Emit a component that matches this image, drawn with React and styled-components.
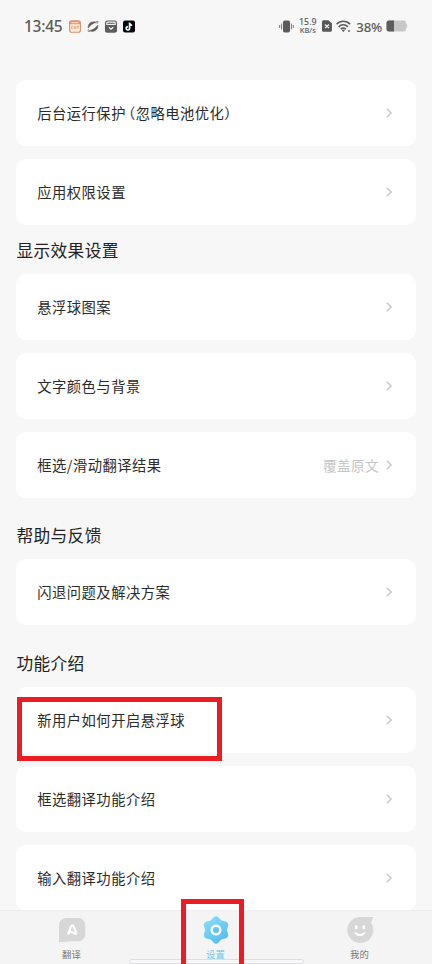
import React from "react";
import styled, { createGlobalStyle } from "styled-components";

const GlobalStyle = createGlobalStyle`
  html, body { margin: 0; padding: 0; background: #f7f7f7; }
  * { box-sizing: border-box; }
`;

const Screen = styled.div`
  position: relative;
  display: flex;
  flex-direction: column;
  width: 432px;
  height: 964px;
  overflow: hidden;
  background: #f7f7f7;
  color: #2b2b2b;
  font-family: "Noto Sans CJK SC", sans-serif;
`;

const StatusBar = styled.header`
  display: flex;
  flex: none;
  justify-content: space-between;
  height: 80px;
  padding: 15px 24px 0 24px;
  color: #5b5b5b;
  font-family: "Noto Sans", sans-serif;
`;

const StatusGroup = styled.div`
  display: flex;
  align-items: center;
  height: 22px;
  gap: ${(p) => p.$gap}px;
`;

const Clock = styled.span`
  width: 39px;
  font-size: 15.5px;
  font-weight: 500;
  letter-spacing: -0.25px;
  line-height: 22px;
  white-space: nowrap;
`;

const Speed = styled.span`
  display: flex;
  flex-direction: column;
  align-items: center;
  width: 18px;
  padding-bottom: 1px;
  font-weight: 500;
  white-space: nowrap;
`;

const SpeedValue = styled.span`
  font-size: 8.8px;
  line-height: 8px;
`;

const SpeedUnit = styled.span`
  font-size: 7.5px;
  line-height: 8px;
`;

const Percent = styled.span`
  width: 25.5px;
  margin-right: -0.5px;
  padding-top: 1px;
  font-size: 13.2px;
  font-weight: 500;
  line-height: 22px;
  letter-spacing: -0.1px;
`;

const Icon = styled.svg`
  display: block;
  flex: none;
`;

const Content = styled.main`
  display: flex;
  flex: none;
  flex-direction: column;
  height: 830px;
  padding: 0 16px;
  overflow: hidden;
`;

const Heading = styled.h2`
  flex: none;
  height: ${(p) => p.$height}px;
  margin: 0;
  padding: ${(p) => p.$height - 36}px 0 0 0.5px;
  color: #222;
  font-size: 16.7px;
  font-weight: 400;
  line-height: 24px;
  letter-spacing: 0.35px;
`;

const CardList = styled.section`
  display: flex;
  flex: none;
  flex-direction: column;
  gap: 13px;
`;

const Card = styled.div`
  display: flex;
  flex: none;
  align-items: center;
  height: 66px;
  padding: 0 22.7px 0 21.3px;
  border-radius: 10px;
  background: #fff;
`;

const CardTitle = styled.span`
  flex: 1;
  font-size: 14.3px;
  line-height: 22px;
  letter-spacing: 0.47px;
`;

const OpenParen = styled.span`
  margin-left: 2.2px;
  font-feature-settings: "halt";
`;

const CardValue = styled.span`
  margin-right: 6.3px;
  color: #c6c6c6;
  font-size: 13.6px;
  line-height: 22px;
  letter-spacing: 0.4px;
`;

const TabBar = styled.nav`
  display: grid;
  flex: none;
  grid-template-columns: repeat(3, 1fr);
  height: 54px;
  border-top: 1px solid #eeeff0;
  background: #f4f4f5;
`;

const Tab = styled.div`
  display: flex;
  flex-direction: column;
  align-items: center;
  padding: 5px 1px 0 0;
  color: ${(p) => (p.$active ? "#72c6e6" : "#77777a")};
`;

const TabLabel = styled.span`
  margin-top: 3px;
  font-size: 9.4px;
  line-height: 14px;
`;

const HomeIndicator = styled.div`
  position: absolute;
  left: 129px;
  bottom: 0;
  width: 175px;
  height: 5px;
  border: 1px solid #dedee2;
  border-radius: 3px;
  background: #f7f7f8;
`;

const Highlight = styled.div`
  position: absolute;
  left: ${(p) => p.$x}px;
  top: ${(p) => p.$y}px;
  width: ${(p) => p.$w}px;
  height: ${(p) => p.$h}px;
  border: 5px solid #ea1c24;
`;

const Chevron = () => (
  <Icon width="8" height="12" viewBox="0 0 8 12" fill="none" stroke="#c6c6c6" strokeWidth="1.4">
    <path d="M1.8 1.7 6.1 6 1.8 10.3" />
  </Icon>
);

const CalendarIcon = () => (
  <Icon width="12" height="13" viewBox="0 0 12 13">
    <rect x=".6" y=".9" width="10.8" height="11.3" rx="2" fill="#fbeee4" stroke="#dc8e68" strokeWidth="1.1" />
    <path d="M.6 4.2V3A2 2 0 0 1 2.6.9h6.8a2 2 0 0 1 2 2.1v1.2z" fill="#ee9460" />
    <path d="M2.5 2.7h7" stroke="#fff" strokeWidth=".7" />
    <path d="M2.4 6v3h.7c1.4 0 1.4-3 0-3zM5 9l1-3 1 3M5.4 8h1.3M8 9V6h1.2c.9 0 .9 1.5 0 1.5H8" fill="none" stroke="#eea36c" strokeWidth=".75" />
  </Icon>
);

const PlanetIcon = () => (
  <Icon width="12" height="13" viewBox="0 0 13 13" fill="none" stroke="#5e5e5e">
    <path d="M1.3 8.3C.6 4.5 3.4 1.3 7.4 1.3c1.2 0 2.2.3 3 .8C7.2 2.5 3.4 5 1.3 8.3z" fill="#5e5e5e" strokeWidth=".5" />
    <path d="M11.7 5c.7 3.7-2 6.8-6 6.8-1.2 0-2.2-.3-3-.8 3.4-.6 6.9-2.8 9-6z" fill="#5e5e5e" strokeWidth=".5" />
    <path d="M2 9.5c-.9 1.2-1.2 1.9-.7 2.3.4.2 1.1 0 2-.5M11 3.5c.9-1.2 1.4-2 .9-2.4-.4-.3-1.1-.1-2 .4" strokeWidth=".8" />
  </Icon>
);

const BoxIcon = () => (
  <Icon width="12" height="13" viewBox="0 0 12 13">
    <rect x=".6" y="1" width="10.8" height="11" rx="1.8" fill="#eee" stroke="#5d5d5d" strokeWidth="1.2" />
    <path d="M2.4 3.3h7.2" stroke="#5d5d5d" strokeWidth="1" />
    <path d="M0 5h12v5.4A2 2 0 0 1 10 12.5H2a2 2 0 0 1-2-2.1z" fill="#5d5d5d" />
    <path d="m4 7.4 2 1.8 2.2-2" fill="none" stroke="#fff" strokeWidth="1.2" />
  </Icon>
);

const NoteIcon = () => (
  <Icon width="12" height="13" viewBox="0 0 12 13">
    <rect y=".5" width="12" height="12" rx="2" fill="#08080c" />
    <g fill="none" strokeWidth="1.3">
      <path d="M6.3 2.5v5.7a1.7 1.7 0 1 1-1.7-1.7M6.3 2.8c.2 1.4 1 2.1 2.4 2.2" stroke="#8cdcdc" />
      <path d="M6.8 2.8v5.6a1.7 1.7 0 1 1-1.7-1.7M6.8 3c.2 1.4 1 2.2 2.4 2.3" stroke="#fff" />
      <path d="M7.5 7v1.5" stroke="#d3677d" strokeWidth=".6" />
    </g>
  </Icon>
);

const VibrateIcon = () => (
  <Icon width="15" height="13" viewBox="0 0 15 13" fill="#5b5b5b">
    <rect x="4" y=".5" width="7" height="12" rx="1.7" />
    <path d="M.7 5v3M2.6 3.5v6M12.4 3.5v6M14.3 5v3" stroke="#777" strokeWidth="1" />
  </Icon>
);

const SimIcon = () => (
  <Icon width="10" height="12" viewBox="0 0 10 12">
    <path d="M1.5.2H6.3L9.9 3.3v7a1.5 1.5 0 0 1-1.5 1.5H1.5A1.5 1.5 0 0 1 0 10.3V1.7A1.5 1.5 0 0 1 1.5.2z" fill="#575757" />
    <path d="m3 4.5 4 3.6M7 4.5 3 8.1" stroke="#f5f5f5" strokeWidth="1.2" />
  </Icon>
);

const WifiIcon = () => (
  <Icon width="15" height="13" viewBox="0 0 15 13" fill="none" stroke="#5b5b5b" strokeWidth="1.6">
    <path d="M.5 4.3c3.6-4 10-4 13.6 0M2.7 6.9c2.5-2.8 6.7-2.8 9.2 0M4.8 9.2c1.4-1.5 3.6-1.5 5 0" />
    <path d="M5.6 10.3c1-.9 2.4-.9 3.4 0l-1.7 1.8z" fill="#5b5b5b" stroke="none" />
    <circle cx="13" cy="11" r=".9" fill="#5b5b5b" stroke="none" />
  </Icon>
);

const BatteryIcon = () => (
  <Icon width="22" height="12" viewBox="0 0 22 12">
    <rect x=".5" y=".5" width="19.5" height="11" rx="2.5" fill="#c8c8c8" />
    <path d="M3 .5H8v11H3A2.5 2.5 0 0 1 .5 9V3A2.5 2.5 0 0 1 3 .5z" fill="#5d5d5d" />
    <path d="M20 3.5c1.7.5 1.7 4.5 0 5z" fill="#c8c8c8" />
  </Icon>
);

const TranslateIcon = () => (
  <Icon width="28" height="28" viewBox="0 0 28 28">
    <path d="M8 2h12.3a7 7 0 0 1 7 7v9.3a7 7 0 0 1-7 7c-6 0-12 .2-19.3 1V9a7 7 0 0 1 7-7z" fill="#d7d7d8" />
    <path d="M10.2 17.6 13.2 10.2c.5-1.2 1.8-1.2 2.3 0l2.6 6.2c.5 1.3-.6 1.9-1.5 1.2-1.2-1-2.3-1.8-3.6-1.8-1.3 0-2 .6-2.8 1.8z" fill="none" stroke="#fff" strokeWidth="2.2" strokeLinejoin="round" />
  </Icon>
);

const SettingsIcon = () => (
  <Icon width="28" height="28" viewBox="0 0 28 28">
    <defs>
      <linearGradient id="gear" gradientUnits="userSpaceOnUse" x1="5" y1="2" x2="23" y2="26">
        <stop stopColor="#86dcfb" />
        <stop offset="1" stopColor="#55bbeb" />
      </linearGradient>
    </defs>
    <path
      d="M14 4 17.6 7.76 22.66 9 21.2 14 22.66 19 17.6 20.24 14 24 10.4 20.24 5.34 19 6.8 14 5.34 9 10.4 7.76Z"
      fill="url(#gear)"
      stroke="url(#gear)"
      strokeWidth="7"
      strokeLinejoin="round"
    />
    <circle cx="14" cy="14" r="4.3" fill="#63c5ef" stroke="#fff" strokeWidth="2.4" />
  </Icon>
);

const ProfileIcon = () => (
  <Icon width="28" height="28" viewBox="0 0 28 28">
    <path d="M14 1h13.2l-2.1 5.8A13 13 0 1 1 14 1z" fill="#d7d7d8" />
    <path d="M10.2 10.5v1.5M17.8 10.5v1.5" stroke="#fff" strokeWidth="2.5" strokeLinecap="round" />
    <path d="M9.8 17.2c2.5 2.4 5.9 2.4 8.4 0" fill="none" stroke="#fff" strokeWidth="2.2" strokeLinecap="round" />
  </Icon>
);

const Row = ({ children, value }) => (
  <Card>
    <CardTitle>{children}</CardTitle>
    {value && <CardValue>{value}</CardValue>}
    <Chevron />
  </Card>
);

export default function App() {
  return (
    <Screen>
      <GlobalStyle />
      <StatusBar>
        <StatusGroup $gap={6}>
          <Clock>13:45</Clock>
          <CalendarIcon />
          <PlanetIcon />
          <BoxIcon />
          <NoteIcon />
        </StatusGroup>
        <StatusGroup $gap={4.8}>
          <VibrateIcon />
          <Speed>
            <SpeedValue>15.9</SpeedValue>
            <SpeedUnit>KB/s</SpeedUnit>
          </Speed>
          <SimIcon />
          <WifiIcon />
          <Percent>38%</Percent>
          <BatteryIcon />
        </StatusGroup>
      </StatusBar>
      <Content>
        <CardList>
          <Row>
            后台运行保护<OpenParen>（</OpenParen>忽略电池优化）
          </Row>
          <Row>应用权限设置</Row>
        </CardList>
        <Heading $height={49}>显示效果设置</Heading>
        <CardList>
          <Row>悬浮球图案</Row>
          <Row>文字颜色与背景</Row>
          <Row value="覆盖原文">框选/滑动翻译结果</Row>
        </CardList>
        <Heading $height={61.2}>帮助与反馈</Heading>
        <CardList>
          <Row>闪退问题及解决方案</Row>
        </CardList>
        <Heading $height={61.8}>功能介绍</Heading>
        <CardList>
          <Row>新用户如何开启悬浮球</Row>
          <Row>框选翻译功能介绍</Row>
          <Row>输入翻译功能介绍</Row>
        </CardList>
      </Content>
      <TabBar>
        <Tab>
          <TranslateIcon />
          <TabLabel>翻译</TabLabel>
        </Tab>
        <Tab $active>
          <SettingsIcon />
          <TabLabel>设置</TabLabel>
        </Tab>
        <Tab>
          <ProfileIcon />
          <TabLabel>我的</TabLabel>
        </Tab>
      </TabBar>
      <HomeIndicator />
      <Highlight $x={17} $y={697} $w={205} $h={64} />
      <Highlight $x={181} $y={899} $w={63} $h={72} />
    </Screen>
  );
}
